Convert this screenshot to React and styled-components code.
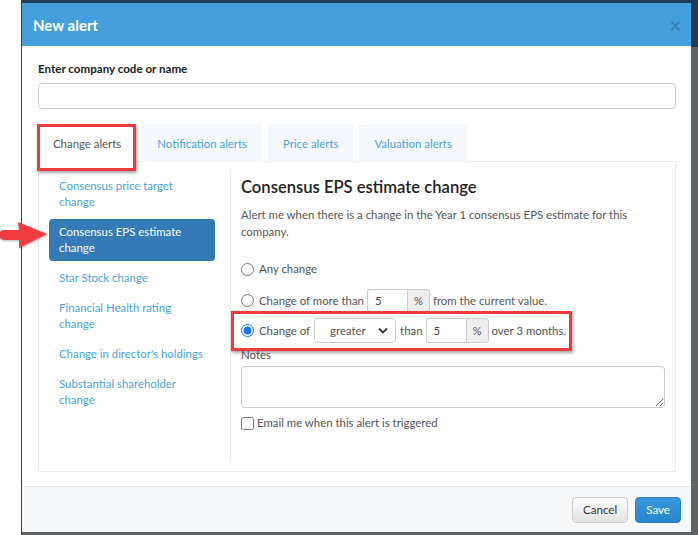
import React from 'react';
import styled, { createGlobalStyle } from 'styled-components';

const GlobalStyle = createGlobalStyle`
  html, body {
    margin: 0;
    padding: 0;
    background: #ffffff;
    overflow: hidden;
  }
  * { box-sizing: border-box; }
`;

const FONT = `"Lato", "Liberation Sans", Arial, sans-serif`;

const Screen = styled.div`
  position: relative;
  display: flex;
  width: 698px;
  height: 535px;
  font-family: ${FONT};
  font-size: 11.4px;
  color: #555;
`;

const Gutter = styled.div`
  width: 21px;
  background: #ffffff;
`;

const Backdrop = styled.div`
  flex: 1;
  display: flex;
  padding: 3px 7px 3px 0;
  border-left: 1px solid #3c3f42;
  background: linear-gradient(to bottom, #1f3d5b 0, #1f3d5b 47px, #5f6366 47px);
`;

const Modal = styled.div`
  flex: 1;
  display: flex;
  flex-direction: column;
  background: #ffffff;
`;

const Header = styled.div`
  height: 43px;
  display: flex;
  align-items: center;
  justify-content: space-between;
  padding: 0 10px 0 11px;
  background: #459fdd;
`;

const Title = styled.div`
  color: #ffffff;
  font-size: 15px;
  font-weight: 700;
`;

const Close = styled.div`
  color: #000;
  opacity: 0.2;
  font-size: 20px;
  font-weight: 700;
  line-height: 1;
`;

const Body = styled.div`
  flex: 1;
  display: flex;
  flex-direction: column;
  padding: 15px 15px 14px 16px;
`;

const Label = styled.div`
  font-weight: 700;
  font-size: 11.6px;
  color: #222;
  line-height: 16px;
`;

const TextInput = styled.div`
  height: 26px;
  margin-top: 6px;
  border: 1px solid #ccc;
  border-radius: 4px;
`;

const Tabs = styled.div`
  display: flex;
  gap: 6px;
  margin-top: 15px;
  margin-bottom: -1px;
  position: relative;
  z-index: 1;
`;

const Tab = styled.div`
  position: relative;
  height: 38px;
  display: flex;
  align-items: center;
  padding: 0 14px;
  border: 1px solid ${({ $active }) => ($active ? '#e6e6e6' : 'transparent')};
  border-bottom-color: ${({ $active }) => ($active ? '#fff' : 'transparent')};
  border-radius: 3px 3px 0 0;
  background: ${({ $active }) => ($active ? '#ffffff' : '#f4f8fc')};
  color: ${({ $active }) => ($active ? '#555' : '#4aa3df')};
`;

const Highlight = styled.div`
  position: absolute;
  border: 3px solid #ee3a3d;
  box-shadow: 1px 2px 3px rgba(0, 0, 0, 0.35);
  pointer-events: none;
`;

const TabHighlight = styled(Highlight)`
  left: -2px;
  top: -1px;
  right: -1px;
  bottom: -10px;
`;

const Panel = styled.div`
  flex: 1;
  display: flex;
  padding: 10px;
  border: 1px solid #ececec;
`;

const Nav = styled.div`
  width: 166px;
  margin-right: 15px;
  padding-top: 1px;
  display: flex;
  flex-direction: column;
  gap: 4px;
`;

const NavItem = styled.div`
  padding: 5px 10px;
  line-height: 16px;
  border-radius: 4px;
  background: ${({ $active }) => ($active ? '#337ab7' : 'transparent')};
  color: ${({ $active }) => ($active ? '#ffffff' : '#4aa3df')};
`;

const Content = styled.div`
  flex: 1;
  display: flex;
  flex-direction: column;
  border-left: 1px solid #e8e8e8;
  padding-left: 10px;
  margin-top: -2px;
  padding-top: 2px;
`;

const Heading = styled.h4`
  margin: 4px 0 8px;
  font-size: 16.6px;
  line-height: 22px;
  font-weight: 600;
  color: #222;
`;

const Para = styled.p`
  margin: 0;
  line-height: 17px;
`;

const OptionRow = styled.label`
  position: relative;
  display: flex;
  align-items: center;
  gap: 3px;
  min-height: 22px;
  margin-top: ${({ $mt }) => $mt}px;
  line-height: 16px;
`;

const Radio = styled.input.attrs({ type: 'radio' })`
  width: 13px;
  height: 13px;
  margin: 0 2px 0 0;
  accent-color: #1a73e8;
`;

const InputGroup = styled.div`
  display: flex;
  height: ${({ $h }) => $h}px;
`;

const NumInput = styled.div`
  width: 40px;
  display: flex;
  align-items: center;
  padding-left: 7px;
  border: 1px solid #ccc;
  border-right: none;
  border-radius: 3px 0 0 3px;
  color: #444;
`;

const Addon = styled.div`
  width: 23px;
  display: flex;
  align-items: center;
  justify-content: center;
  border: 1px solid #ccc;
  border-radius: 0 3px 3px 0;
  background: #eeeeee;
  font-size: 11px;
  color: #555;
`;

const Select = styled.div`
  width: 82px;
  height: 25px;
  display: flex;
  align-items: center;
  justify-content: space-between;
  padding: 0 7px 0 15px;
  margin: 0 1px;
  border: 1px solid #ccc;
  border-radius: 4px;
  color: #555;
`;

const RowHighlight = styled(Highlight)`
  left: -10px;
  top: -7px;
  width: 341px;
  height: 40px;
`;

const NotesLabel = styled.div`
  margin-top: 4px;
  line-height: 16px;
`;

const Notes = styled.textarea`
  height: 42px;
  margin-top: 3px;
  border: 1px solid #ccc;
  border-radius: 4px;
  resize: vertical;
  font-family: ${FONT};
`;

const CheckRow = styled.label`
  display: flex;
  align-items: center;
  margin-top: 7px;
  line-height: 16px;
`;

const Checkbox = styled.input.attrs({ type: 'checkbox' })`
  width: 13px;
  height: 13px;
  margin: 0 3px 0 0;
`;

const Footer = styled.div`
  height: 46px;
  display: flex;
  align-items: center;
  justify-content: flex-end;
  gap: 7px;
  padding: 0 10px;
  border-top: 1px solid #e5e5e5;
  background: #f7f8fa;
`;

const Button = styled.button`
  height: 26px;
  padding: 0 10px;
  border-radius: 4px;
  font-family: ${FONT};
  font-size: 11.6px;
  border: 1px solid ${({ $primary }) => ($primary ? '#2a7fc2' : '#ccc')};
  color: ${({ $primary }) => ($primary ? '#ffffff' : '#333')};
  background: ${({ $primary }) =>
    $primary
      ? 'linear-gradient(to bottom, #3a97dd, #2585cf)'
      : 'linear-gradient(to bottom, #ffffff, #e2e2e2)'};
`;

const Arrow = styled.svg`
  position: absolute;
  left: 0;
  top: 220px;
  filter: drop-shadow(1px 1px 1px rgba(0, 0, 0, 0.3));
`;

const navItems = [
  'Consensus price target change',
  'Consensus EPS estimate change',
  'Star Stock change',
  'Financial Health rating change',
  "Change in director's holdings",
  'Substantial shareholder change',
];

const tabs = ['Change alerts', 'Notification alerts', 'Price alerts', 'Valuation alerts'];

export default function App() {
  return (
    <Screen>
      <GlobalStyle />
      <Gutter />
      <Backdrop>
        <Modal>
          <Header>
            <Title>New alert</Title>
            <Close>×</Close>
          </Header>
          <Body>
            <Label>Enter company code or name</Label>
            <TextInput />
            <Tabs>
              {tabs.map((t, i) => (
                <Tab key={t} $active={i === 0}>
                  {t}
                  {i === 0 && <TabHighlight />}
                </Tab>
              ))}
            </Tabs>
            <Panel>
              <Nav>
                {navItems.map((n, i) => (
                  <NavItem key={n} $active={i === 1}>{n}</NavItem>
                ))}
              </Nav>
              <Content>
                <Heading>Consensus EPS estimate change</Heading>
                <Para>
                  Alert me when there is a change in the Year 1 consensus EPS estimate for this
                  company.
                </Para>
                <OptionRow $mt={18}>
                  <Radio name="opt" />
                  Any change
                </OptionRow>
                <OptionRow $mt={9}>
                  <Radio name="opt" />
                  Change of more than
                  <InputGroup $h={23}>
                    <NumInput>5</NumInput>
                    <Addon>%</Addon>
                  </InputGroup>
                  from the current value.
                </OptionRow>
                <OptionRow $mt={6}>
                  <Radio name="opt" defaultChecked />
                  Change of
                  <Select>
                    greater
                    <svg width="10" height="7" viewBox="0 0 10 7">
                      <path d="M1 1.5 L5 5.5 L9 1.5" fill="none" stroke="#333" strokeWidth="1.8" />
                    </svg>
                  </Select>
                  than
                  <InputGroup $h={25}>
                    <NumInput>5</NumInput>
                    <Addon>%</Addon>
                  </InputGroup>
                  over 3 months.
                  <RowHighlight />
                </OptionRow>
                <NotesLabel>Notes</NotesLabel>
                <Notes />
                <CheckRow>
                  <Checkbox />
                  Email me when this alert is triggered
                </CheckRow>
              </Content>
            </Panel>
          </Body>
          <Footer>
            <Button>Cancel</Button>
            <Button $primary>Save</Button>
          </Footer>
        </Modal>
      </Backdrop>
      <Arrow width="48" height="30" viewBox="0 0 48 30">
        <path d="M4 10 H19 L18 2 L47 14 L19 28 L19 20 H4 A5 5 0 0 1 4 10 Z" fill="#f03c3e" />
      </Arrow>
    </Screen>
  );
}
